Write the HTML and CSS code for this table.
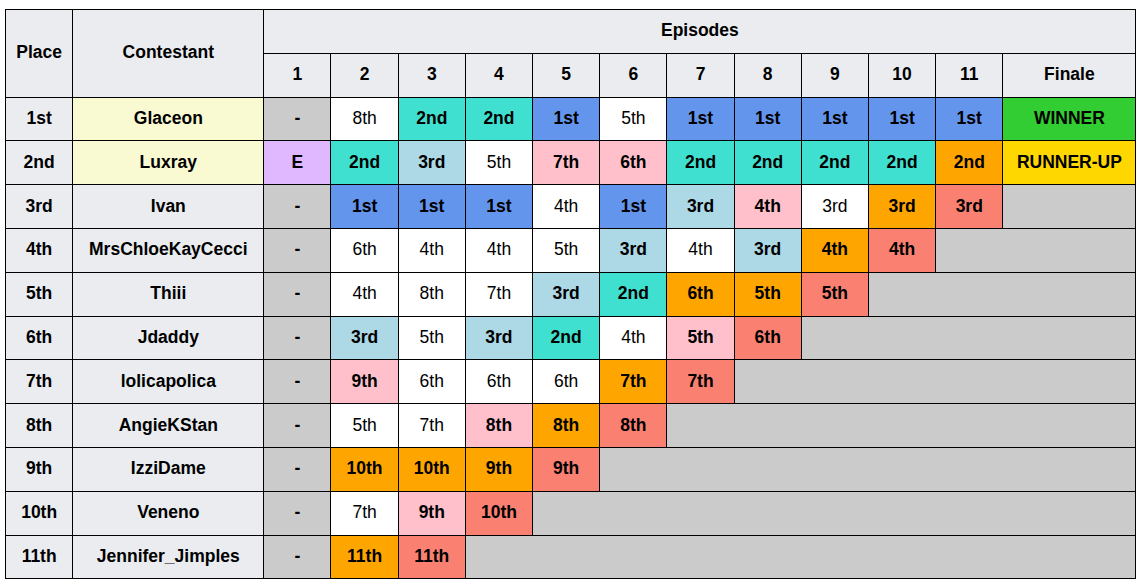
FILE: index.html
```html
<!DOCTYPE html>
<html>
<head>
<meta charset="utf-8">
<link rel="stylesheet" href="styles.css">
</head>
<body>
<table class="results">
<colgroup>
<col class="c-place"><col class="c-name">
<col class="c-ep"><col class="c-ep"><col class="c-ep"><col class="c-ep"><col class="c-ep"><col class="c-ep"><col class="c-ep"><col class="c-ep"><col class="c-ep"><col class="c-ep"><col class="c-ep">
<col class="c-fin">
</colgroup>
<tr><th rowspan="2">Place</th><th rowspan="2">Contestant</th><th colspan="12">Episodes</th></tr>
<tr><th>1</th><th>2</th><th>3</th><th>4</th><th>5</th><th>6</th><th>7</th><th>8</th><th>9</th><th>10</th><th>11</th><th>Finale</th></tr>
<tr><th>1st</th><th class="yl">Glaceon</th><td class="gr">-</td><td class="w">8th</td><td class="tq">2nd</td><td class="tq">2nd</td><td class="bl">1st</td><td class="w">5th</td><td class="bl">1st</td><td class="bl">1st</td><td class="bl">1st</td><td class="bl">1st</td><td class="bl">1st</td><td class="gn">WINNER</td></tr>
<tr><th>2nd</th><th class="yl">Luxray</th><td class="mv">E</td><td class="tq">2nd</td><td class="lb">3rd</td><td class="w">5th</td><td class="pk">7th</td><td class="pk">6th</td><td class="tq">2nd</td><td class="tq">2nd</td><td class="tq">2nd</td><td class="tq">2nd</td><td class="or">2nd</td><td class="gd">RUNNER-UP</td></tr>
<tr><th>3rd</th><th>Ivan</th><td class="gr">-</td><td class="bl">1st</td><td class="bl">1st</td><td class="bl">1st</td><td class="w">4th</td><td class="bl">1st</td><td class="lb">3rd</td><td class="pk">4th</td><td class="w">3rd</td><td class="or">3rd</td><td class="sa">3rd</td><td class="gr"></td></tr>
<tr><th>4th</th><th>MrsChloeKayCecci</th><td class="gr">-</td><td class="w">6th</td><td class="w">4th</td><td class="w">4th</td><td class="w">5th</td><td class="lb">3rd</td><td class="w">4th</td><td class="lb">3rd</td><td class="or">4th</td><td class="sa">4th</td><td class="gr" colspan="2"></td></tr>
<tr><th>5th</th><th>Thiii</th><td class="gr">-</td><td class="w">4th</td><td class="w">8th</td><td class="w">7th</td><td class="lb">3rd</td><td class="tq">2nd</td><td class="or">6th</td><td class="or">5th</td><td class="sa">5th</td><td class="gr" colspan="3"></td></tr>
<tr><th>6th</th><th>Jdaddy</th><td class="gr">-</td><td class="lb">3rd</td><td class="w">5th</td><td class="lb">3rd</td><td class="tq">2nd</td><td class="w">4th</td><td class="pk">5th</td><td class="sa">6th</td><td class="gr" colspan="4"></td></tr>
<tr><th>7th</th><th>lolicapolica</th><td class="gr">-</td><td class="pk">9th</td><td class="w">6th</td><td class="w">6th</td><td class="w">6th</td><td class="or">7th</td><td class="sa">7th</td><td class="gr" colspan="5"></td></tr>
<tr><th>8th</th><th>AngieKStan</th><td class="gr">-</td><td class="w">5th</td><td class="w">7th</td><td class="pk">8th</td><td class="or">8th</td><td class="sa">8th</td><td class="gr" colspan="6"></td></tr>
<tr><th>9th</th><th>IzziDame</th><td class="gr">-</td><td class="or">10th</td><td class="or">10th</td><td class="or">9th</td><td class="sa">9th</td><td class="gr" colspan="7"></td></tr>
<tr><th>10th</th><th>Veneno</th><td class="gr">-</td><td class="w">7th</td><td class="pk">9th</td><td class="sa">10th</td><td class="gr" colspan="8"></td></tr>
<tr><th>11th</th><th>Jennifer_Jimples</th><td class="gr">-</td><td class="or">11th</td><td class="sa">11th</td><td class="gr" colspan="9"></td></tr>
</table>
</body>
</html>
```
FILE: styles.css
```css
html, body {
  margin: 0;
  padding: 0;
  background: #fff;
}
body {
  padding: 9px 0 0 5px;
  font-family: "Liberation Sans", Arial, sans-serif;
  font-size: 17.5px;
  color: #000;
}
.results {
  border-collapse: collapse;
  table-layout: fixed;
  width: 1131px;
}
.c-place { width: 67.3px; }
.c-name { width: 191px; }
.c-ep { width: 67.2px; }
.c-fin { width: 133px; }
.results tr {
  height: 43.8px;
}
.results th,
.results td {
  border: 1px solid #000;
  padding: 0 0 2px 0;
  text-align: center;
  vertical-align: middle;
  font-weight: bold;
  line-height: 20px;
}
.results th {
  background: #eaecf0;
}
.results th.yl { background: #fafad2; }
.gr { background: #cbcbcb; }
.w { background: #fff; font-weight: normal !important; }
.tq { background: #40e0d0; }
.bl { background: #6495ed; }
.lb { background: #add8e6; }
.pk { background: #ffc0cb; }
.or { background: #ffa500; }
.sa { background: #fa8072; }
.gn { background: #32cd32; }
.gd { background: #ffd700; }
.mv { background: #e0b8ff; }
```
